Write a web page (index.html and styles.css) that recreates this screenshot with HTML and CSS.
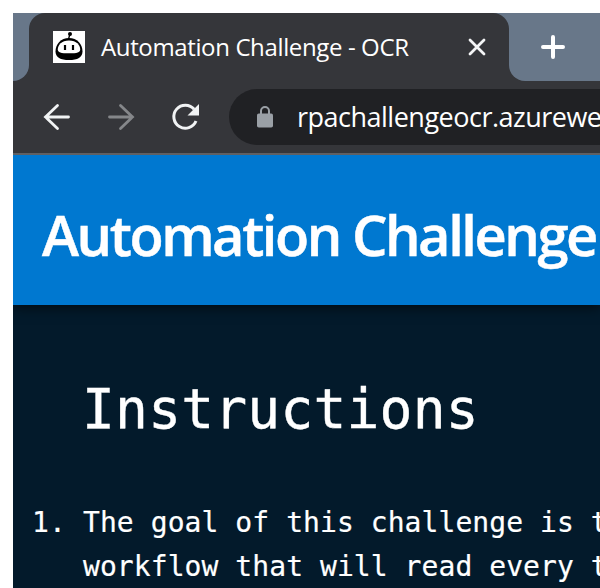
FILE: index.html
```
<!DOCTYPE html>
<html lang="en">
<head>
<meta charset="utf-8">
<title>Automation Challenge - OCR</title>
<link rel="stylesheet" href="styles.css">
</head>
<body>
<div class="window">
  <div class="tabstrip">
    <div class="tab-prev"></div>
    <div class="tab">
      <svg class="favicon" viewBox="0 0 32 32">
        <rect width="32" height="32" fill="#fff"/>
        <path d="M17 3l-1.500 5" stroke="#000" stroke-width="1.3"/>
        <circle cx="17" cy="3" r="2" fill="#000"/>
        <path d="M16 7C8 7 2.500 13 2.500 20.500c0 6 5 8.500 13.500 8.500s13.500-2.500 13.500-8.500C29.500 13 24 7 16 7z" fill="#000"/>
        <path d="M16 9.500C8.500 9.500 4.800 14 4.800 18.500c0 3 3 3.800 11.200 3.800s11.200-.8 11.200-3.800C27.200 14 23.500 9.500 16 9.500z" fill="#fff"/>
        <path d="M12 14v5M20 14v5" stroke="#000" stroke-width="2.200"/>
      </svg>
      <span class="tab-title">Automation Challenge - OCR</span>
      <svg class="close" viewBox="0 0 18 18"><path d="M2 2l14 14M16 2L2 16" stroke="#f4f5f6" stroke-width="2.800" stroke-linecap="round"/></svg>
    </div>
    <div class="tab-rest">
      <svg class="plus" viewBox="0 0 24 24"><path d="M12 2v20M2 12h20" stroke="#fff" stroke-width="4" stroke-linecap="round"/></svg>
    </div>
  </div>
  <div class="toolbar">
    <svg class="nav" viewBox="0 0 28 28"><path d="M25.500 14H2.500M14.500 2.500L2.500 14l12 11.500" fill="none" stroke="#f1f3f4" stroke-width="2.800" stroke-linecap="round"/></svg>
    <svg class="nav" viewBox="0 0 28 28"><path d="M2.500 14h23M13.500 2.500l12 11.500-12 11.500" fill="none" stroke="#85878a" stroke-width="2.800" stroke-linecap="round"/></svg>
    <svg class="nav" viewBox="0 0 28 28"><path d="M23.200 6.300A11.500 11.500 0 1 0 25 18" fill="none" stroke="#f1f3f4" stroke-width="3"/><path d="M28 1v11.500H16.500z" fill="#f1f3f4"/></svg>
    <div class="address">
      <svg class="lock" viewBox="0 0 16 22"><rect y="7.500" width="16" height="14" rx="1.800" fill="#9aa0a6"/><path d="M4 9V5a4 4 0 0 1 8 0v4" fill="none" stroke="#9aa0a6" stroke-width="2"/></svg>
      <span class="url">rpachallengeocr.azurewe</span>
    </div>
  </div>
  <header class="banner"><h1>Automation Challenge</h1></header>
  <main class="content">
    <h2>Instructions</h2>
    <ol class="steps">
      <li><span class="num">1.</span><span>The goal of this challenge is t<br>workflow that will read every t</span></li>
    </ol>
  </main>
</div>
</body>
</html>
```

FILE: styles.css
```
* { box-sizing: border-box; }
html, body { margin: 0; height: 588px; overflow: hidden; background: #fff; }
.window {
  margin: 13px 0 0 13px;
  height: 575px;
  overflow: hidden;
  display: flex;
  flex-direction: column;
  color: #fff;
  white-space: nowrap;
}
svg { display: block; flex: none; }
.tabstrip { display: flex; height: 68px; flex: none; background: linear-gradient(#687789 50%, #35363a 50%); }
.tab-prev { width: 16px; background: #687789; border-bottom-right-radius: 16px; }
.tab {
  width: 480px;
  flex: none;
  background: #35363a;
  border-radius: 16px 16px 0 0;
  display: flex;
  align-items: center;
  padding-left: 24px;
}
.favicon { width: 32px; height: 32px; }
.tab-title { width: 382px; padding: 0 0 1px 16px; font: 24px/32px "Open Sans", sans-serif; letter-spacing: -0.37px; }
.close { width: 18px; height: 18px; margin-left: 1px; }
.tab-rest { flex: 1; background: #687789; border-bottom-left-radius: 16px; display: flex; align-items: center; padding-left: 32px; }
.plus { width: 24px; height: 24px; }
.toolbar {
  position: relative;
  z-index: 1;
  height: 74px;
  flex: none;
  background: #35363a;
  border-bottom: 2px solid #5f6063;
  display: flex;
  align-items: center;
  gap: 36px;
  padding-left: 30px;
}
.nav { width: 28px; height: 28px; }
.address {
  flex: 1;
  height: 56px;
  margin-left: -6px;
  border-radius: 28px 0 0 28px;
  background: #202124;
  display: flex;
  align-items: center;
  padding-left: 28px;
  overflow: hidden;
}
.lock { width: 16px; height: 22px; }
.url { padding-left: 24px; font: 27px/36px "Open Sans", sans-serif; letter-spacing: -0.5px; }
.banner {
  position: relative;
  height: 150px;
  flex: none;
  background: #0078d0;
  box-shadow: 0 2px 12px rgba(0, 0, 0, 0.65);
  display: flex;
  align-items: center;
  padding: 8px 0 0 29px;
}
h1 { margin: 0; font: 600 56px/70px "Open Sans", sans-serif; letter-spacing: -2.45px; word-spacing: 0; -webkit-text-stroke: 0.5px #fff; }
.content { flex: 1; background: #031a2b; font-family: "DejaVu Sans Mono", monospace; }
h2 { margin: 0; padding: 69px 0 0 69px; font-size: 54.6px; line-height: 70px; font-weight: 400; letter-spacing: 0.2px; -webkit-text-stroke: 0.4px #fff; }
.steps { list-style: none; margin: 0; padding: 57px 0 0 19px; font-size: 28px; line-height: 44px; letter-spacing: 0.07px; -webkit-text-stroke: 0.2px #fff; }
.steps li { display: flex; }
.num { width: 51px; flex: none; }
```
